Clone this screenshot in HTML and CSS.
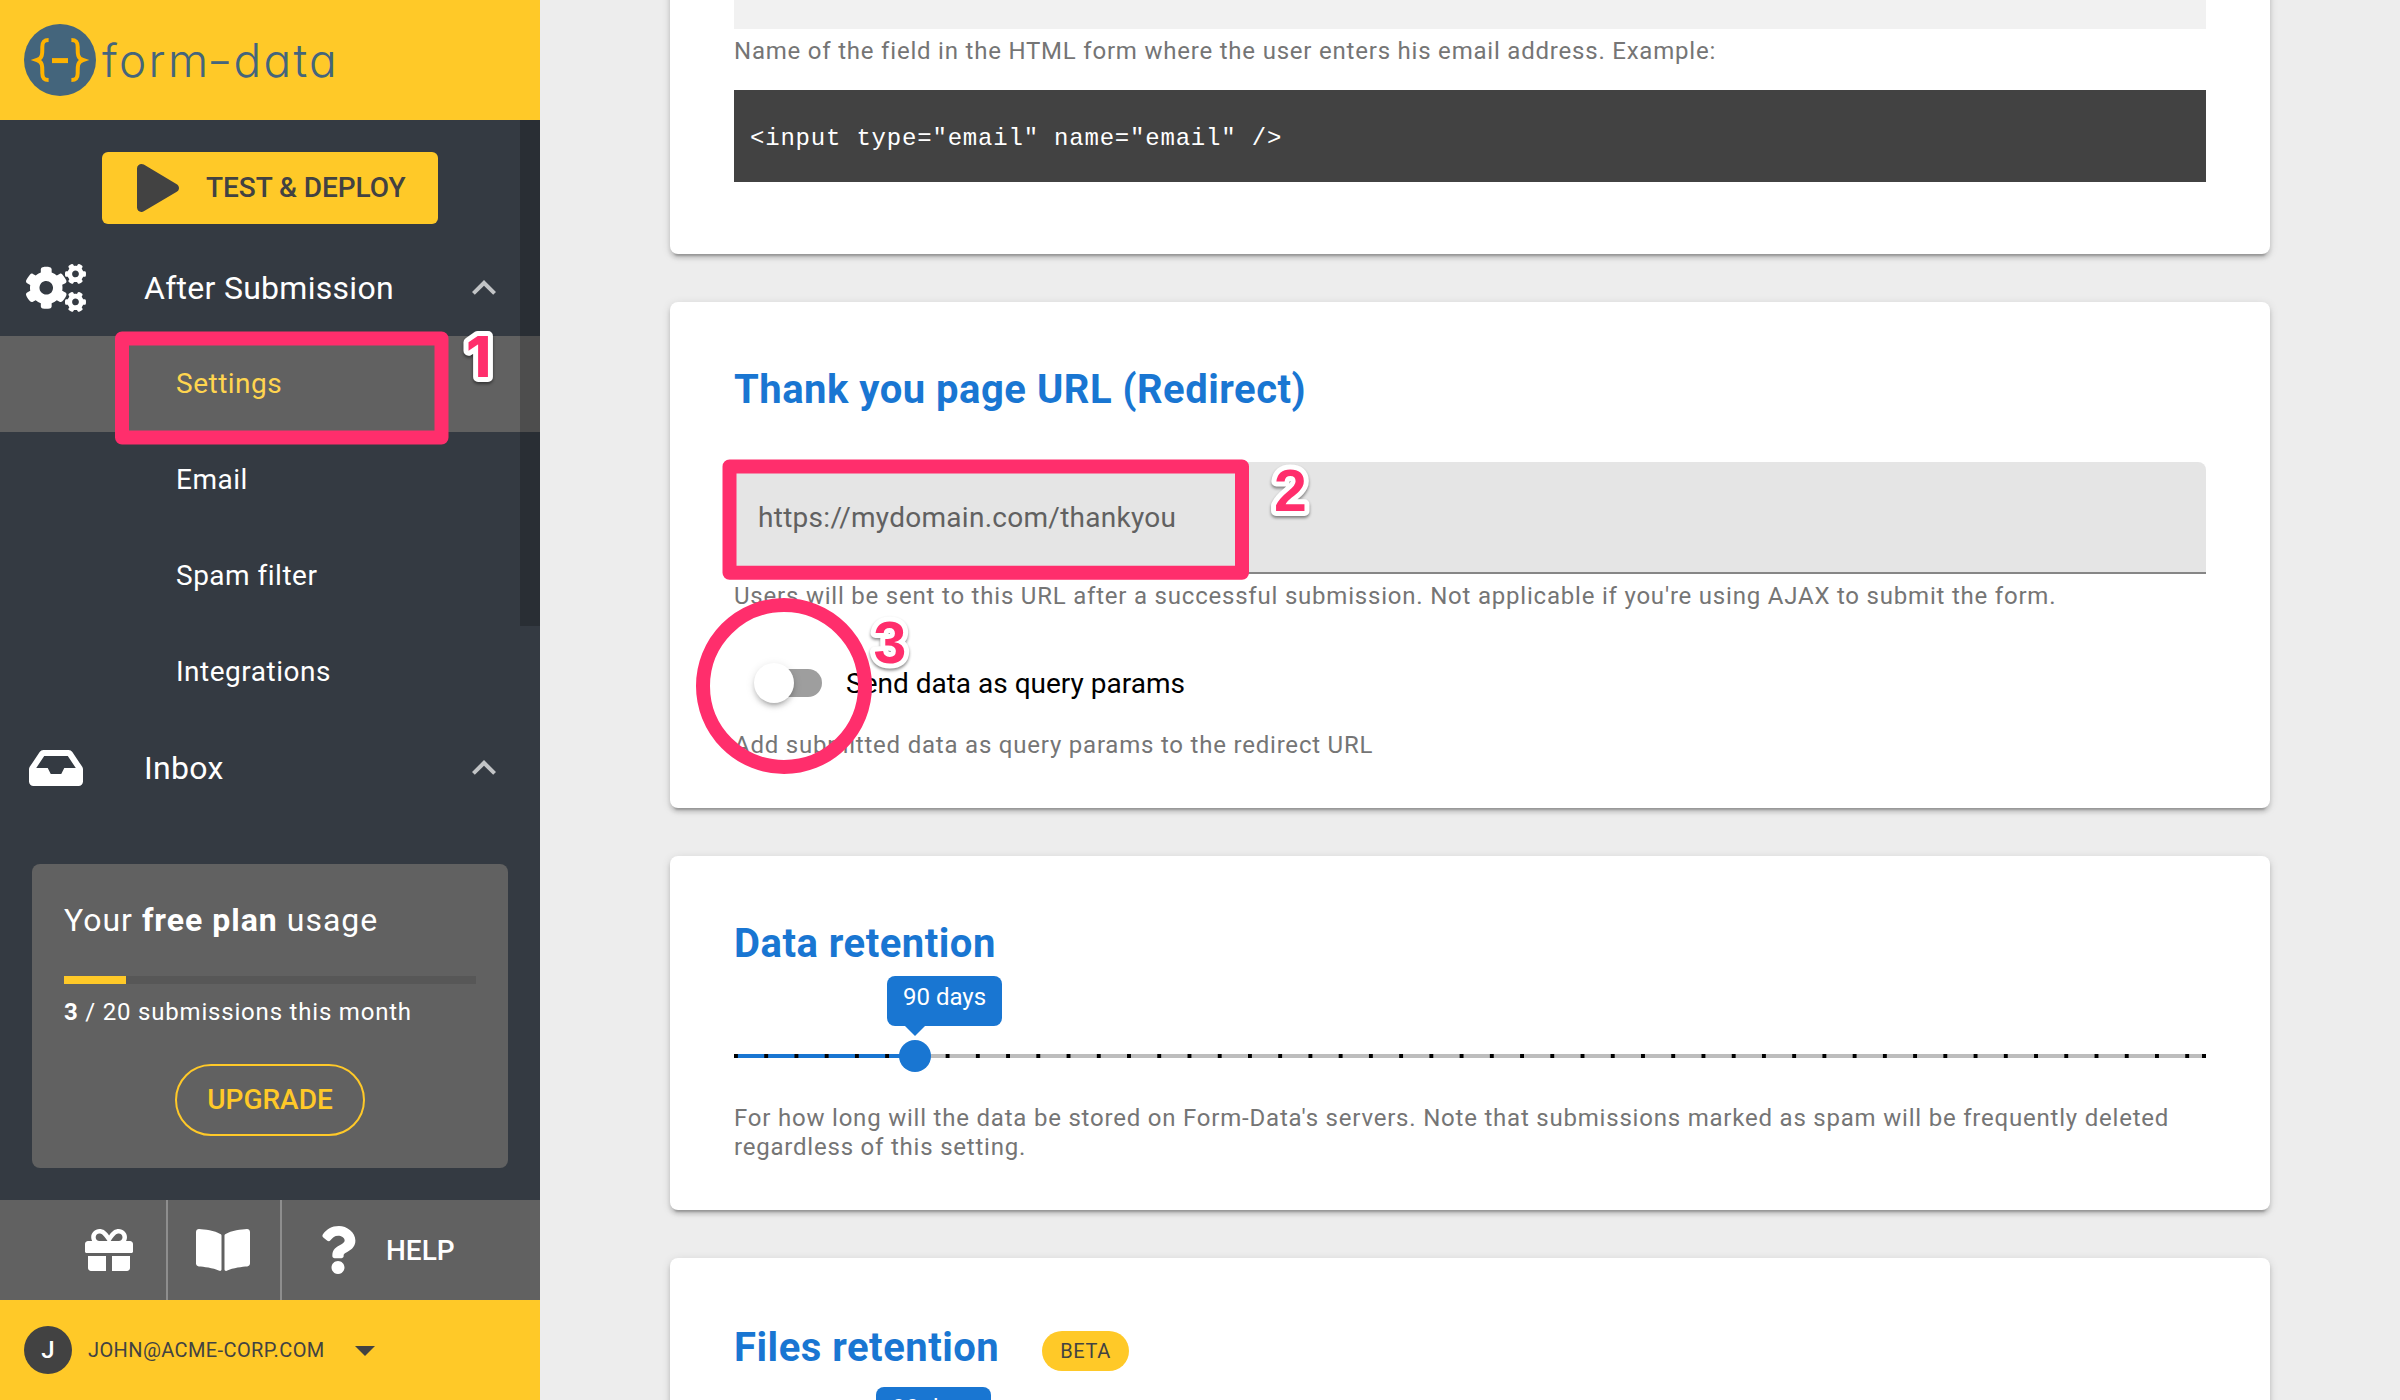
FILE: index.html
```html
<!DOCTYPE html>
<html lang="en">
<head>
<meta charset="utf-8">
<title>form-data settings</title>
<link rel="stylesheet" href="styles.css">
</head>
<body>
<div class="app">
  <aside class="sidebar">
    <header class="brand">
      <svg class="brand-mark" viewBox="0 0 72 72">
        <circle cx="36" cy="36" r="36" fill="#44657c"/>
        <g fill="none" stroke="#ffb300">
          <path stroke-width="4" d="M24.600 16C19.500 16 18.300 18.500 18.300 23C18.300 29 19 34 13 36C19 38 18.300 43 18.300 49C18.300 53.500 19.500 56 24.600 56"/>
          <path stroke-width="4" d="M47.400 16C52.500 16 53.700 18.500 53.700 23C53.700 29 53 34 59 36C53 38 53.700 43 53.700 49C53.700 53.500 52.500 56 47.400 56"/>
          <path stroke-width="5" d="M28 36.600h16"/>
        </g>
      </svg>
      <span class="brand-name">form<span class="brand-dash">-</span>data</span>
    </header>

    <nav class="nav">
      <button class="deploy">
        <svg class="deploy-icon" viewBox="0 0 448 512"><path d="M424.4 214.7L72.4 6.600C43.800-10.300 0 6.100 0 47.900V464c0 37.500 40.700 60.100 72.400 41.300l352-208c31.400-18.500 31.500-64.100 0-82.600z"/></svg>
        <span>TEST &amp; DEPLOY</span>
      </button>
      <div class="section">
        <svg class="section-icon" viewBox="0 0 640 512"><path d="M512.1 191l-8.2 14.3c-3 5.3-9.4 7.5-15.1 5.4-11.8-4.4-22.6-10.7-32.1-18.6-4.6-3.8-5.8-10.5-2.8-15.7l8.2-14.3c-6.9-8-12.3-17.3-15.9-27.4h-16.5c-6 0-11.2-4.3-12.2-10.3-2-12-2.1-24.6 0-37.1 1-6 6.2-10.4 12.2-10.4h16.5c3.6-10.1 9-19.4 15.9-27.4l-8.2-14.3c-3-5.2-1.9-11.9 2.8-15.7 9.5-7.9 20.4-14.2 32.1-18.6 5.7-2.1 12.1.1 15.1 5.4l8.2 14.3c10.5-1.9 21.2-1.9 31.7 0L552 6.3c3-5.3 9.4-7.5 15.1-5.4 11.8 4.400 22.600 10.700 32.100 18.600 4.600 3.800 5.800 10.500 2.800 15.700l-8.200 14.300c6.900 8 12.300 17.300 15.900 27.400h16.500c6 0 11.200 4.300 12.200 10.300 2 12 2.100 24.600 0 37.100-1 6-6.200 10.400-12.200 10.400h-16.500c-3.600 10.100-9 19.400-15.900 27.400l8.200 14.300c3 5.200 1.900 11.900-2.800 15.700-9.500 7.900-20.400 14.200-32.100 18.600-5.700 2.100-12.100-.1-15.100-5.400l-8.200-14.300c-10.400 1.900-21.200 1.900-31.700 0zm-10.500-58.800c38.500 29.600 82.400-14.300 52.800-52.800-38.500-29.700-82.400 14.300-52.800 52.800zM386.300 286.100l33.700 16.800c10.100 5.800 14.500 18.100 10.500 29.100-8.900 24.200-26.400 46.400-42.600 65.800-7.400 8.900-20.200 11.100-30.300 5.300l-29.100-16.800c-16 13.700-34.600 24.600-54.900 31.700v33.600c0 11.600-8.300 21.600-19.700 23.600-24.600 4.200-50.400 4.400-75.900 0-11.500-2-20-11.900-20-23.600V418c-20.300-7.200-38.900-18-54.900-31.700L74 403c-10 5.800-22.900 3.600-30.300-5.300-16.200-19.400-33.300-41.600-42.200-65.700-4-10.900.4-23.200 10.500-29.100l33.300-16.800c-3.900-20.900-3.900-42.400 0-63.400L12 205.800c-10.100-5.800-14.600-18.100-10.500-29 8.900-24.200 26-46.400 42.200-65.800 7.400-8.900 20.200-11.100 30.300-5.300l29.100 16.800c16-13.700 34.600-24.600 54.900-31.700V57.100c0-11.500 8.200-21.500 19.600-23.500 24.600-4.200 50.500-4.400 76-.1 11.500 2 20 11.900 20 23.600v33.600c20.300 7.200 38.900 18 54.900 31.700l29.100-16.800c10-5.800 22.900-3.600 30.300 5.300 16.200 19.400 33.200 41.600 42.100 65.800 4 10.900.1 23.200-10 29.100l-33.700 16.800c3.900 21 3.900 42.500 0 63.500zm-117.600 21.100c59.200-77-28.700-164.900-105.700-105.700-59.200 77 28.700 164.900 105.700 105.700zm243.400 182.700l-8.200 14.300c-3 5.300-9.400 7.500-15.100 5.400-11.800-4.400-22.600-10.700-32.100-18.600-4.600-3.800-5.800-10.500-2.800-15.700l8.200-14.300c-6.900-8-12.300-17.300-15.900-27.400h-16.500c-6 0-11.200-4.300-12.200-10.300-2-12-2.100-24.600 0-37.100 1-6 6.200-10.400 12.200-10.400h16.500c3.600-10.100 9-19.400 15.900-27.400l-8.200-14.300c-3-5.200-1.900-11.900 2.800-15.700 9.500-7.900 20.400-14.200 32.100-18.600 5.700-2.100 12.100.1 15.100 5.400l8.200 14.300c10.500-1.900 21.200-1.900 31.700 0l8.200-14.300c3-5.300 9.400-7.500 15.100-5.400 11.800 4.400 22.600 10.700 32.100 18.600 4.600 3.800 5.800 10.500 2.800 15.700l-8.200 14.300c6.900 8 12.300 17.300 15.900 27.400h16.500c6 0 11.200 4.300 12.200 10.300 2 12 2.100 24.600 0 37.100-1 6-6.200 10.400-12.200 10.400h-16.500c-3.600 10.100-9 19.400-15.900 27.400l8.200 14.300c3 5.200 1.900 11.900-2.800 15.700-9.500 7.900-20.400 14.200-32.100 18.600-5.700 2.100-12.100-.1-15.100-5.400l-8.200-14.300c-10.400 1.900-21.200 1.900-31.700 0zM501.600 431c38.500 29.600 82.400-14.300 52.800-52.800-38.500-29.600-82.400 14.300-52.800 52.800z"/></svg>
        <span class="section-label">After Submission</span>
        <svg class="chevron" viewBox="0 0 24 24"><path d="M12 8l-6 6 1.410 1.410L12 10.830l4.590 4.580L18 14z"/></svg>
      </div>
      <a class="item item--active">Settings</a>
      <a class="item">Email</a>
      <a class="item">Spam filter</a>
      <a class="item">Integrations</a>
      <div class="section">
        <svg class="section-icon" viewBox="0 0 576 512"><path d="M567.938 243.908L462.250 85.374A48.003 48.003 0 0 0 422.311 64H153.689a48 48 0 0 0-39.938 21.374L8.062 243.908A47.994 47.994 0 0 0 0 270.533V400c0 26.510 21.490 48 48 48h480c26.510 0 48-21.490 48-48V270.533a47.994 47.994 0 0 0-8.062-26.625zM162.252 128h251.497l85.333 128H376l-32 64H232l-32-64H76.918l85.334-128z"/></svg>
        <span class="section-label">Inbox</span>
        <svg class="chevron" viewBox="0 0 24 24"><path d="M12 8l-6 6 1.410 1.410L12 10.830l4.590 4.580L18 14z"/></svg>
      </div>
      <div class="scrollbar"></div>
    </nav>

    <section class="usage">
      <p class="usage-title">Your <b>free plan</b> usage</p>
      <div class="meter"><div class="meter-fill" style="width:15%"></div></div>
      <p class="usage-count"><b>3</b> / 20 submissions this month</p>
      <button class="upgrade">UPGRADE</button>
    </section>

    <div class="tools">
      <a class="tool tool--gift"><svg viewBox="0 0 512 512"><path d="M32 448c0 17.700 14.300 32 32 32h160V320H32v128zm256 32h160c17.700 0 32-14.300 32-32V320H288v160zm192-320h-42.100c6.200-12.100 10.100-25.500 10.100-40 0-48.500-39.500-88-88-88-41.600 0-68.500 21.300-103 68.300-34.500-47-61.400-68.300-103-68.300-48.500 0-88 39.500-88 88 0 14.500 3.800 27.900 10.100 40H32c-17.700 0-32 14.300-32 32v80c0 8.800 7.200 16 16 16h480c8.800 0 16-7.200 16-16v-80c0-17.700-14.300-32-32-32zm-326.100 0c-22.100 0-40-17.900-40-40s17.900-40 40-40c19.900 0 34.600 3.300 86.100 80h-86.100zm206.100 0h-86.100c51.400-76.500 65.700-80 86.100-80 22.100 0 40 17.900 40 40s-17.900 40-40 40z"/></svg></a>
      <a class="tool tool--docs"><svg viewBox="0 0 576 512"><path d="M542.220 32.050c-54.800 3.110-163.720 14.430-230.960 55.590-4.640 2.840-7.270 7.890-7.270 13.170v363.870c0 11.550 12.630 18.850 23.280 13.490 69.180-34.820 169.230-44.320 218.700-46.920 16.890-.89 30.020-14.430 30.020-30.660V62.750c.01-17.710-15.350-31.740-33.770-30.700zM264.730 87.640C197.500 46.480 88.580 35.170 33.780 32.050 15.360 31.010 0 45.040 0 62.750V400.600c0 16.240 13.130 29.780 30.020 30.660 49.490 2.600 149.590 12.110 218.770 46.950 10.620 5.350 23.210-1.940 23.210-13.460V100.630c0-5.290-2.620-10.140-7.270-12.990z"/></svg></a>
      <a class="tool tool--help"><svg viewBox="0 0 384 512"><path d="M202.021 0C122.202 0 70.503 32.703 29.914 91.026c-7.363 10.580-5.093 25.086 5.178 32.874l43.138 32.709c10.373 7.865 25.132 6.026 33.253-4.148 25.049-31.381 43.630-49.449 82.757-49.449 30.764 0 68.816 19.799 68.816 49.631 0 22.552-18.617 34.134-48.993 51.164-35.423 19.860-82.299 44.576-82.299 106.405V320c0 13.255 10.745 24 24 24h72.471c13.255 0 24-10.745 24-24v-5.773c0-42.860 125.268-44.645 125.268-160.627C377.504 66.256 286.902 0 202.021 0zM192 373.459c-38.196 0-69.271 31.075-69.271 69.271 0 38.195 31.075 69.270 69.271 69.270s69.271-31.075 69.271-69.271-31.075-69.270-69.271-69.270z"/></svg><span>HELP</span></a>
    </div>

    <footer class="account">
      <span class="avatar">J</span>
      <span class="account-email">JOHN@ACME-CORP.COM</span>
      <svg class="account-caret" viewBox="0 0 24 24"><path d="M7 10l5 5 5-5z"/></svg>
    </footer>
  </aside>

  <main class="content">
    <section class="card card--email">
      <div class="field field--disabled"></div>
      <p class="hint">Name of the field in the HTML form where the user enters his email address. Example:</p>
      <pre class="code">&lt;input type="email" name="email" /&gt;</pre>
    </section>

    <section class="card card--redirect">
      <h2 class="title">Thank you page URL (Redirect)</h2>
      <div class="field"><span>https://mydomain.com/thankyou</span></div>
      <p class="hint">Users will be sent to this URL after a successful submission. Not applicable if you're using AJAX to submit the form.</p>
      <div class="toggle-row">
        <span class="switch"><span class="switch-thumb"></span></span>
        <span class="toggle-label">Send data as query params</span>
      </div>
      <p class="hint hint--toggle">Add submitted data as query params to the redirect URL</p>
    </section>

    <section class="card card--data">
      <h2 class="title">Data retention</h2>
      <div class="slider">
        <div class="slider-fill" style="width:181px"></div>
        <div class="slider-ticks"></div>
        <div class="slider-handle" style="left:181px"><span class="bubble">90 days</span></div>
      </div>
      <p class="hint hint--slider">For how long will the data be stored on Form-Data's servers. Note that submissions marked as spam will be frequently deleted regardless of this setting.</p>
    </section>

    <section class="card card--files">
      <div class="title-row">
        <h2 class="title">Files retention</h2>
        <span class="chip">BETA</span>
      </div>
      <div class="slider">
        <div class="slider-fill" style="width:170px"></div>
        <div class="slider-ticks"></div>
        <div class="slider-handle" style="left:170px"><span class="bubble">90 days</span></div>
      </div>
    </section>
  </main>

  <svg class="callouts" viewBox="0 0 2400 1400">
    <g class="callout-shape">
      <rect x="122" y="338.500" width="319.500" height="99"/>
      <rect x="729.500" y="466.500" width="512.500" height="106.300"/>
      <circle cx="784" cy="686" r="81"/>
    </g>
    <g class="callout-number">
      <text class="callout-one" x="466" y="376.500">1</text>
      <text x="1274" y="510.500">2</text>
      <text x="873.500" y="662.500">3</text>
    </g>
  </svg>
</div>
</body>
</html>
```

FILE: styles.css
```css
* { box-sizing: border-box; }

body {
  margin: 0;
  font-family: Roboto, "Liberation Sans", sans-serif;
  background: #ededed;
}

h2, p, pre { margin: 0; }

button {
  border: 0;
  padding: 0;
  font: inherit;
}

.app {
  position: relative;
  display: flex;
  width: 2400px;
  height: 1400px;
  overflow: hidden;
}

/* Sidebar */
.sidebar {
  display: flex;
  flex-direction: column;
  width: 540px;
  background: #343a42;
  color: #fff;
}

.brand {
  display: flex;
  align-items: center;
  height: 120px;
  padding-left: 24px;
  background: #ffc928;
}

.brand-mark { width: 72px; height: 72px; }

.brand-name {
  margin: 0 0 1px 6px;
  font-family: Inter, sans-serif;
  font-size: 46px;
  font-weight: 280;
  font-feature-settings: "cv11";
  letter-spacing: 2.300px;
  color: #44657c;
}

.brand-dash { display: inline-block; transform: scaleX(1.250); }

.nav {
  position: relative;
  display: flex;
  flex-direction: column;
  height: 744px;
  padding-top: 32px;
}

.deploy {
  display: flex;
  align-items: center;
  align-self: center;
  width: 336px;
  height: 72px;
  margin-bottom: 16px;
  padding-left: 35px;
  gap: 27px;
  border-radius: 6px;
  background: #ffc928;
  color: #424242;
  font-size: 28px;
  font-weight: 500;
  letter-spacing: -0.050px;
}

.deploy span { padding-bottom: 2px; }

.deploy-icon { width: 42px; height: 48px; fill: #424242; }

.section {
  display: flex;
  align-items: center;
  height: 96px;
  padding: 0 32px 0 26px;
}

.section-icon { width: 60px; height: 48px; fill: #fff; }

.section-label {
  flex: 1;
  margin-left: 58px;
  font-size: 32px;
  letter-spacing: 0.280px;
}

.chevron { width: 48px; height: 48px; fill: #c2c4c6; }

.item {
  display: flex;
  align-items: center;
  height: 96px;
  padding: 0 0 1px 176px;
  font-size: 28px;
  letter-spacing: 0.500px;
}

.item--active { background: #616161; color: #ffd54f; }

.scrollbar {
  position: absolute;
  top: 0;
  right: 0;
  width: 20px;
  height: 506px;
  background: rgba(0, 0, 0, 0.2);
}

.usage {
  display: flex;
  flex-direction: column;
  height: 304px;
  margin: 0 32px 32px;
  padding: 37px 32px 32px;
  border-radius: 8px;
  background: #616161;
}

.usage-title { font-size: 32px; line-height: 38px; letter-spacing: 1px; }

.meter { height: 8px; margin-top: 37px; background: #575757; }

.meter-fill { height: 8px; background: #ffc928; }

.usage-count {
  margin-top: 14px;
  font-size: 24px;
  line-height: 29px;
  letter-spacing: 0.800px;
}

.upgrade {
  align-self: center;
  width: 190px;
  height: 72px;
  margin-top: 37px;
  padding-bottom: 1px;
  border: 2px solid #ffc928;
  border-radius: 36px;
  background: none;
  color: #ffc928;
  font-size: 28px;
  font-weight: 500;
}

.tools { display: flex; height: 100px; background: #616161; }

.tool { display: flex; align-items: center; }

.tool svg { height: 48px; fill: #fff; }

.tool--gift { width: 168px; padding-left: 85px; border-right: 2px solid #8e8e8e; }

.tool--docs { width: 114px; padding-left: 28px; border-right: 2px solid #8e8e8e; }

.tool--help {
  padding-left: 38px;
  gap: 30px;
  font-size: 28px;
  font-weight: 500;
  letter-spacing: 0;
}

.account {
  display: flex;
  align-items: center;
  height: 100px;
  padding-left: 24px;
  background: #ffc928;
  color: #424242;
}

.avatar {
  width: 48px;
  height: 48px;
  border-radius: 50%;
  background: #424242;
  color: #fff;
  font-size: 24px;
  font-weight: 500;
  line-height: 48px;
  text-align: center;
}

.account-email {
  margin: 0 16px 0 16px;
  font-size: 20px;
  letter-spacing: 0.390px;
}

.account-caret { width: 48px; height: 48px; fill: #424242; }

/* Content */
.content {
  display: flex;
  flex: 1;
  flex-direction: column;
  gap: 48px;
  padding: 0 130px;
}

.card {
  flex-shrink: 0;
  padding: 65px 64px 48px;
  border-radius: 8px;
  background: #fff;
  box-shadow: 0 6px 2px -4px rgba(0, 0, 0, 0.2), 0 4px 4px rgba(0, 0, 0, 0.14), 0 2px 10px rgba(0, 0, 0, 0.12);
}

.card--email { height: 294px; margin-top: -40px; padding-top: 40px; }

.card--files { height: 360px; padding-top: 67px; }

.title {
  color: #1976d2;
  font-size: 40px;
  font-weight: 700;
  line-height: 46px;
  letter-spacing: 0.500px;
}

.title-row { display: flex; align-items: center; gap: 43px; }

.chip {
  height: 40px;
  padding: 0 18px;
  margin-top: 5px;
  border-radius: 20px;
  background: #ffc928;
  color: #424242;
  font-size: 20px;
  line-height: 40px;
  letter-spacing: 0.600px;
}

.field {
  display: flex;
  align-items: center;
  height: 112px;
  margin-top: 49px;
  padding: 0 24px;
  border-bottom: 2px solid #868686;
  border-radius: 8px 8px 0 0;
  background: #e5e5e5;
  color: #616161;
  font-size: 28px;
  letter-spacing: 0.280px;
}

.field--disabled {
  height: 29px;
  margin-top: 0;
  border: 0;
  border-radius: 0;
  background: #f1f1f1;
}

.hint {
  margin-top: 8px;
  color: #757575;
  font-size: 24px;
  line-height: 29px;
  letter-spacing: 0.790px;
}

.code {
  height: 92px;
  margin-top: 24px;
  padding: 3px 16px 0;
  background: #424242;
  color: #fff;
  font-family: "Liberation Mono", monospace;
  font-size: 24px;
  line-height: 92px;
  letter-spacing: 0.800px;
}

.toggle-row {
  display: flex;
  align-items: center;
  height: 40px;
  margin: 52px 0 28px 24px;
}

.hint--toggle { margin-top: 0; }

.switch {
  position: relative;
  width: 64px;
  height: 28px;
  border-radius: 14px;
  background: #9e9e9e;
}

.switch-thumb {
  position: absolute;
  top: -6px;
  left: -4px;
  width: 40px;
  height: 40px;
  border-radius: 50%;
  background: #fff;
  box-shadow: 0 6px 2px -4px rgba(0, 0, 0, 0.1), 0 4px 4px rgba(0, 0, 0, 0.14), 0 2px 10px rgba(0, 0, 0, 0.12);
}

.toggle-label { margin-left: 24px; color: #000; font-size: 28px; }

.slider {
  position: relative;
  height: 48px;
  margin-top: 65px;
  background: linear-gradient(#bdbdbd, #bdbdbd) center / 100% 4px no-repeat;
}

.slider-fill,
.slider-ticks {
  position: absolute;
  top: 22px;
  left: 0;
  height: 4px;
}

.slider-fill { background: #1976d2; }

.slider-ticks {
  width: 100%;
  background:
    linear-gradient(#000, #000) right / 4px 100% no-repeat,
    linear-gradient(90deg, #000 4px, transparent 4px) 0 0 / 30.240px 100% repeat-x;
}

.slider-handle {
  position: absolute;
  top: 8px;
  width: 32px;
  height: 32px;
  margin-left: -16px;
  border-radius: 50%;
  background: #1976d2;
}

.bubble {
  position: absolute;
  top: -64px;
  left: -12px;
  width: 115px;
  height: 50px;
  border-radius: 8px;
  background: #1976d2;
  color: #fff;
  font-size: 24px;
  line-height: 43px;
  text-align: center;
}

.bubble::after {
  content: "";
  position: absolute;
  top: 50px;
  left: 18px;
  border: 10px solid transparent;
  border-top-color: #1976d2;
  border-bottom: 0;
}

.card--files .slider { margin-top: 72px; }

.hint--slider { margin-top: 24px; }

/* Tutorial callouts drawn over the page */
.callouts {
  position: absolute;
  top: 0;
  left: 0;
  width: 2400px;
  height: 1400px;
}

.callout-shape {
  fill: none;
  stroke: #ff2e6c;
  stroke-width: 14px;
  stroke-linejoin: round;
}

.callout-number {
  fill: #ff2e6c;
  stroke: #fff;
  stroke-width: 10px;
  stroke-linejoin: round;
  paint-order: stroke;
  font-family: "Liberation Sans", Arial, sans-serif;
  font-size: 59px;
  font-weight: 700;
  filter: drop-shadow(0 2px 1.500px rgba(0, 0, 0, 0.45));
}

.callout-one { font-family: Inter, sans-serif; font-size: 57px; font-weight: 800; }
```
